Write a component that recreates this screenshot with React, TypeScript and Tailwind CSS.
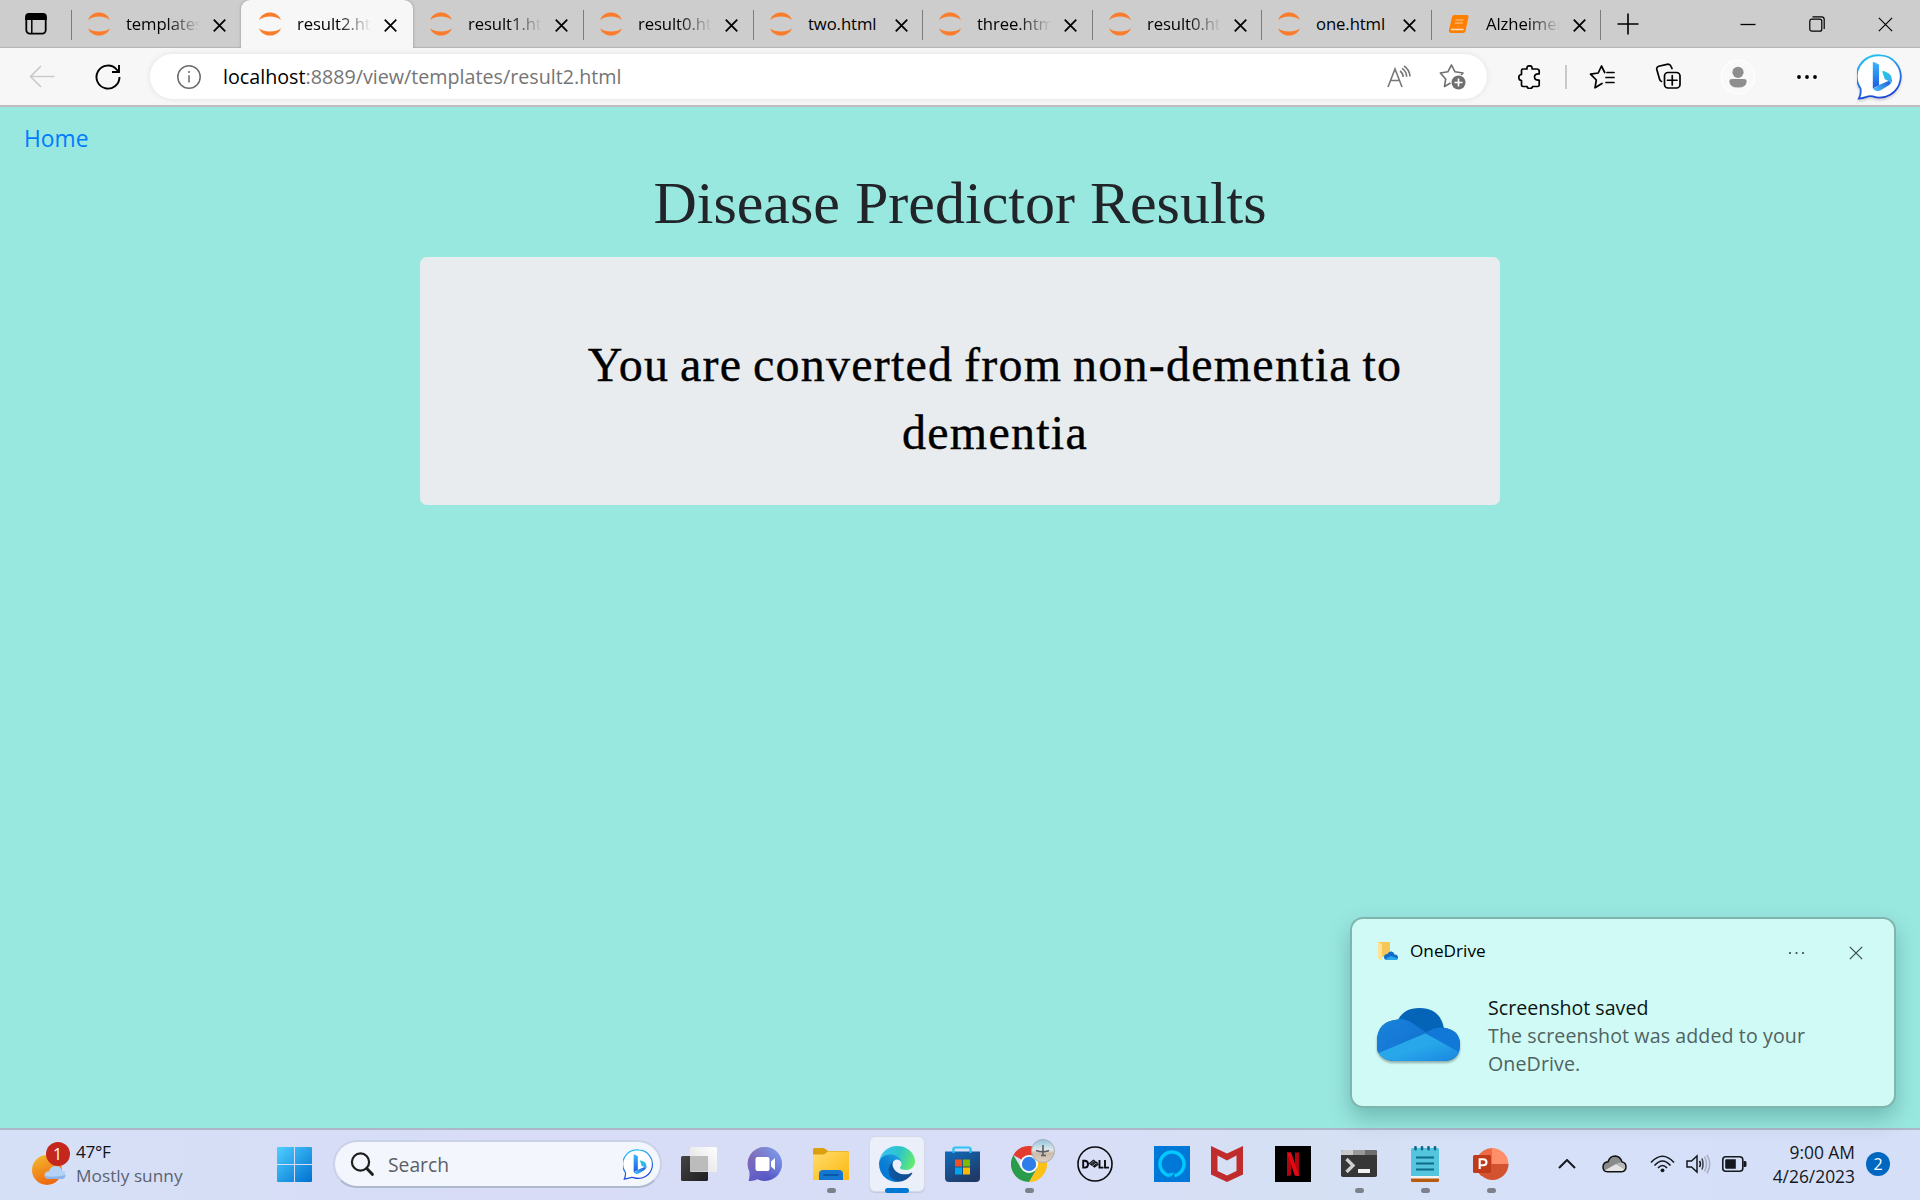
import React from "react";

type Tab = { title: string; width: string; active?: boolean; sep?: boolean; book?: boolean; fade?: boolean };

const tabs: Tab[] = [
  { title: "templates/", width: "w-[170px]", fade: true },
  { title: "result2.html", width: "w-[172px]", active: true, fade: true },
  { title: "result1.html", width: "w-[170px]", sep: true, fade: true },
  { title: "result0.html", width: "w-[170px]", sep: true, fade: true },
  { title: "two.html", width: "w-[169px]", sep: true },
  { title: "three.html", width: "w-[170px]", sep: true, fade: true },
  { title: "result0.html", width: "w-[169px]", sep: true, fade: true },
  { title: "one.html", width: "w-[170px]", sep: true },
  { title: "Alzheimer", width: "w-[169px]", sep: true, book: true, fade: true },
];

function Jupyter() {
  return (
    <svg className="block h-6 w-6 shrink-0" viewBox="0 0 24 24" fill="#fb7d2b">
      <path d="M1 8.3C4.500-2 19.500-2 23 8.300 18 3.300 6 3.300 1 8.300Z" />
      <path d="M1 16.200C4.500 26 19.500 26 23 16.200 18 20.500 6 20.500 1 16.200Z" />
    </svg>
  );
}

function Book() {
  return (
    <svg className="block h-6 w-6 shrink-0" viewBox="0 0 24 24">
      <path d="M7 3h13q2 0 1.500 2l-3 14q-.5 2-2.500 2H4.500Q1.500 21 2 18L5 5q.5-2 2-2Z" fill="#ff7f00" />
      <path d="M8.500 8h8M7.800 11h8" stroke="#ffcf9f" strokeWidth="1.100" />
      <path d="M4 17.500h12.500" stroke="#ffe1c2" strokeWidth="1.500" />
    </svg>
  );
}

function Cross({ className }: { className: string }) {
  return (
    <svg className={className} viewBox="0 0 14 14" fill="none" stroke="currentColor">
      <path d="M.8.8l12.400 12.400M13.200.8L.8 13.200" />
    </svg>
  );
}

function Bing({ className }: { className: string }) {
  return (
    <svg className={className} viewBox="0 0 48 48">
      <defs>
        <linearGradient id="bingRing" x1="0" y1="0" x2=".3" y2="1">
          <stop offset="0" stopColor="#22cdf5" />
          <stop offset=".5" stopColor="#2b8be8" />
          <stop offset="1" stopColor="#1b48d8" />
        </linearGradient>
        <linearGradient id="bingBar" x1="0" y1="0" x2="0" y2="1">
          <stop offset="0" stopColor="#3ab6ff" />
          <stop offset="1" stopColor="#1b5be0" />
        </linearGradient>
        <linearGradient id="bingLow" x1="0" y1="1" x2="1" y2="0">
          <stop offset="0" stopColor="#4cc5f7" />
          <stop offset="1" stopColor="#1a4fd6" />
        </linearGradient>
        <linearGradient id="bingTip" x1="0" y1="0" x2="1" y2="1">
          <stop offset="0" stopColor="#17d0de" />
          <stop offset="1" stopColor="#4aa0f5" />
        </linearGradient>
      </defs>
      <path d="M24.500 1.500a22 22 0 1 1-8 42.800q-3.500-1-6.500.5-4 1.500-8 1.700 2.500-4.500 1.700-10.500A22 22 0 0 1 24.500 1.500Z" fill="#fff" stroke="url(#bingRing)" strokeWidth="1.900" />
      <path d="M16.500 9q0-1 1-.6l4.500 2.100q1 .6 1 1.800v20.200l-6.500 3.600Z" fill="url(#bingBar)" />
      <path d="M16.500 34.500q.5 4.300 5 4.300 2 0 3.800-1.200l8-5q3.200-2.300 3-6l-13.300 5.700-3.200 2.500q-3.300 1.800-3.300-.3Z" fill="url(#bingLow)" />
      <path d="M26.500 19q-.6-1.800 1.400-1.200l4 1.700q4.600 2.300 4.400 7.500-.1 2.500-1.800 4.300 0-3.300-5.500-5Z" fill="url(#bingTip)" />
    </svg>
  );
}

function TabStrip() {
  return (
    <div className="flex h-12 shrink-0 bg-[#cdcdcd] shadow-[inset_0_-2px_1px_-1px_#b4b4b4]">
      <div className="flex w-[71px] items-center pl-6">
        <svg className="h-6 w-6" viewBox="0 0 24 24" fill="none" stroke="#000" strokeWidth="1.800">
          <rect x="2.300" y="3" width="19.400" height="18.600" rx="3.500" />
          <path d="M2 7V5q0-3 3-3h14q3 0 3 3v2Z" fill="#000" />
          <path d="M7.800 7v14" strokeWidth="1.500" />
        </svg>
      </div>
      {tabs.map((t, i) => (
        <div key={i} className={`relative flex h-12 shrink-0 items-center ${t.width} ${t.active ? "z-10 rounded-t-[9px] bg-[#f7f7f7] pl-[17px] shadow-[0_0_3px_rgba(0,0,0,0.28)] [clip-path:inset(-4px_-4px_0_-4px)]" : "pl-4"}`}>
          {i === 0 && <span className="absolute top-2.5 left-0 h-[30px] w-px bg-[#7c7c7c]" />}
          {t.sep && <span className="absolute top-2.5 -right-px h-[30px] w-[1.500px] bg-[#7c7c7c]" />}
          {t.book ? <Book /> : <Jupyter />}
          <span className={`ml-[15px] w-[74px] overflow-hidden text-[16.700px] leading-6 tracking-[-0.100px] whitespace-nowrap text-black ${t.fade ? "[mask-image:linear-gradient(to_right,#000_55%,transparent_100%)]" : ""}`}>
            {t.title}
          </span>
          <Cross className="mt-[2px] ml-[13px] h-[13px] w-[13px] shrink-0 stroke-[1.900]" />
        </div>
      ))}
      <div className="flex flex-1 items-center pl-[17px]">
        <svg className="h-[22px] w-[22px]" viewBox="0 0 22 22" stroke="#000" strokeWidth="1.600">
          <path d="M11 .5v21M.5 11h21" />
        </svg>
      </div>
      <div className="flex w-[180px] items-center justify-between pr-[27px]">
        <svg className="h-4 w-4" viewBox="0 0 16 16" stroke="#000" strokeWidth="1.300">
          <path d="M.5 8.500h15" />
        </svg>
        <svg className="h-4 w-4" viewBox="0 0 16 16" fill="none" stroke="#000" strokeWidth="1.200">
          <rect x=".8" y="3.200" width="12" height="12" rx="2" />
          <path d="M3.500.8h9q2.700 0 2.700 2.700v9.500" />
        </svg>
        <Cross className="h-[15px] w-[15px] stroke-[1.100]" />
      </div>
    </div>
  );
}

function Toolbar() {
  return (
    <div className="flex h-[59px] shrink-0 items-center border-b-2 border-[#bdbdbd] bg-[#f7f7f7]">
      <svg className="ml-[29px] h-6 w-[26px] shrink-0" viewBox="0 0 26 24" fill="none" stroke="#cacaca" strokeWidth="1.700">
        <path d="M1.500 11.500h24M12 1L1.500 11.500 12 22" />
      </svg>
      <svg className="ml-10 h-[26px] w-[26px] shrink-0" viewBox="0 0 26 26" fill="none" stroke="#000" strokeWidth="1.900">
        <path d="M24.500 13A11.500 11.500 0 1 1 21.500 5.300l2 2" />
        <path d="M24 1v7h-7" />
      </svg>
      <div className="ml-[29px] flex h-[45px] w-[1337px] shrink-0 items-center rounded-full bg-white pl-[27px] shadow-[0_0_6px_rgba(0,0,0,0.09)]">
        <svg className="h-6 w-6 shrink-0" viewBox="0 0 24 24" fill="none" stroke="#6a6a6a" strokeWidth="1.500">
          <circle cx="12" cy="12" r="11.200" />
          <path d="M12 10.300v7.200M12 6v2" />
        </svg>
        <div className="ml-[22px] flex-1 text-[19.700px] leading-7 whitespace-nowrap text-[#757575]">
          <span className="text-black">localhost</span>:8889/view/templates/result2.html
        </div>
        <svg className="mr-[28px] h-6 w-6" viewBox="0 0 24 24" fill="none" stroke="#777" strokeWidth="1.600">
          <path d="M1 22L8 4l7 18M3.500 15.500h9M13 6q3 2 3.200 6M15 3.300q4.500 3 4.700 8.500M17 1q5.500 3.500 6 10.500" />
        </svg>
        <svg className="mr-[21px] h-[27px] w-[27px]" viewBox="0 0 27 27" fill="none" stroke="#6f6f6f" strokeWidth="1.600" strokeLinejoin="round">
          <path d="M11.500 20L5.500 23.500 6.700 16 1.300 10l7.500-1.200L12.500 2l3.500 6.800 8 1.200-2 2" />
          <circle cx="19.500" cy="19.500" r="7" fill="#6f6f6f" stroke="none" />
          <path d="M19.500 15.500v8M15.500 19.500h8" stroke="#fff" />
        </svg>
      </div>
      <svg className="ml-[31px] h-6 w-[23px] shrink-0" viewBox="0 0 23 24" fill="none" stroke="#000" strokeWidth="1.700" strokeLinejoin="round">
        <path d="M3.500 5.500q0-1.500 1.500-1.500h4q-.5-3.200 2.500-3.200T14 4h4.500q2.700 0 2.700 2v3q-4.700-.5-4.700 3t4.700 3v5q0 1.500-1.700 1.500H14.500q0 2-2.700 2t-2.700-2H5q-1.500 0-1.500-1.500V15.500Q.8 15.300.8 12.500T3.500 9.500Z" />
      </svg>
      <span className="ml-6 h-6 w-[1.500px] shrink-0 bg-[#c9c9c9]" />
      <svg className="ml-[22px] h-[26px] w-[26px] shrink-0" viewBox="0 0 26 26" fill="none" stroke="#000" strokeWidth="1.700" strokeLinejoin="round" strokeLinecap="round">
        <path d="M13 19.500L6 23.800 7.300 16 1.500 10.200l7.700-1.200L12.500 2l3.200 6.500M18 8.500h7M17 13.500h8M17 18.500h8" />
      </svg>
      <svg className="ml-[40px] h-[27px] w-[27px] shrink-0" viewBox="0 0 27 27" fill="none" stroke="#000" strokeWidth="1.700" strokeLinecap="round">
        <rect x="9.500" y="9.500" width="15.500" height="15.500" rx="3.500" />
        <path d="M17.250 12.500v9.500M12.500 17.250h9.500M6.500 18.500Q5 18 4.500 16L1.800 6.500Q1.300 4 3.700 3.200L12 1.300q3-.5 4 2L17 5.500" />
      </svg>
      <svg className="ml-[38px] h-9 w-9 shrink-0" viewBox="0 0 36 36">
        <circle cx="18" cy="18" r="16.800" fill="#f9f9f9" stroke="#fff" strokeWidth="1.200" />
        <circle cx="18" cy="13.300" r="5.600" fill="#8e8e8e" />
        <path d="M12 20h12q2.600 0 2.600 2.400 0 6.100-8.600 6.100t-8.600-6.100Q9.400 20 12 20Z" fill="#8e8e8e" />
      </svg>
      <svg className="ml-[40px] h-1 w-[22px] shrink-0" viewBox="0 0 22 4">
        <circle cx="3" cy="2" r="1.900" /><circle cx="11" cy="2" r="1.900" /><circle cx="19" cy="2" r="1.900" />
      </svg>
      <Bing className="ml-[39px] h-[46px] w-[46px] shrink-0 drop-shadow-[0_2px_1px_rgba(0,0,0,0.15)]" />
    </div>
  );
}

function CloudLogo({ className }: { className: string }) {
  return (
    <svg className={className} viewBox="0 0 82 58" preserveAspectRatio="none">
      <defs>
        <clipPath id="cloudClip">
          <path d="M17 58A17 17 0 0 1 0 37Q0 14 21 12.500 27 0 42 0 62 0 66 21.500 82 24 82 40 82 58 65 58Z" />
        </clipPath>
        <linearGradient id="cloudLow" x1="0" y1="0" x2="1" y2="1">
          <stop offset="0" stopColor="#28a8ea" /><stop offset=".5" stopColor="#28a8ea" /><stop offset="1" stopColor="#1a86e0" />
        </linearGradient>
        <linearGradient id="cloudLeft" x1="0" y1="0" x2="1" y2="1">
          <stop offset="0" stopColor="#1a86dc" /><stop offset="1" stopColor="#126fd0" />
        </linearGradient>
      </defs>
      <g clipPath="url(#cloudClip)">
        <path d="M0 0h82v58H0Z" fill="#0364b8" />
        <path d="M0 0h22v12q7 0 12 4l15 11L0 52Z" fill="url(#cloudLeft)" />
        <path d="M48 27Q57 20 68 21.500h14V50Z" fill="#1278d8" />
        <path d="M0 50L48 27.500 82 49v9H0Z" fill="url(#cloudLow)" />
      </g>
    </svg>
  );
}

function Toast() {
  return (
    <div className="absolute top-[917px] left-[1350px] flex h-[191px] w-[546px] flex-col rounded-[13px] border-2 border-[#7fb5ad] bg-[#cffaf5] shadow-[0_10px_22px_rgba(0,70,60,0.28)]">
      <div className="flex h-16 items-center pl-[26px]">
        <svg className="h-5 w-5" viewBox="0 0 20 20">
          <path d="M0 1h12v15H3Z" fill="#f6c657" />
          <path d="M0 1l4 2v17l-4-2.500Z" fill="#ffe296" />
          <path d="M9 19q-3 0-3-3t3.500-3q1-3 4-2.500 2.500.3 3 3 3.500.2 3.500 3T17 19Z" fill="#0f6cc8" />
          <path d="M7 18l6-3 6.500 2.500Q19 19 17 19H9Z" fill="#28a8ea" />
        </svg>
        <span className="ml-[12px] flex-1 text-[17.200px] text-black">OneDrive</span>
        <svg className="mt-1 h-1 w-[17px]" viewBox="0 0 17 4" fill="#3a4a49">
          <circle cx="2" cy="2" r="1.100" /><circle cx="8.500" cy="2" r="1.100" /><circle cx="15" cy="2" r="1.100" />
        </svg>
        <Cross className="mt-[3px] mr-[31px] ml-[44px] h-[14px] w-[14px] stroke-[1.200] text-[#3a4a49]" />
      </div>
      <div className="flex pl-[25px]">
        <CloudLogo className="mt-[25px] h-[53px] w-[83px] drop-shadow-[0_2px_1px_rgba(0,0,0,0.3)]" />
        <div className="mt-[11px] ml-[28px] w-[340px] text-[19.600px] leading-7 text-[#4f6361]">
          <div className="text-[#0b1413]">Screenshot saved</div>
          <div className="tracking-[0.100px]">The screenshot was added to your OneDrive.</div>
        </div>
      </div>
    </div>
  );
}

function Slot({ children, running, active, className = "justify-center" }: { children: React.ReactNode; running?: boolean; active?: boolean; className?: string }) {
  return (
    <div className={`relative flex h-[68px] w-[66px] shrink-0 items-center ${className}`}>
      {active && <span className="absolute top-[6px] left-[5px] h-14 w-14 rounded-md border border-[#d3d9e6] bg-[#ebeffa] shadow-[0_1px_1px_#c0c8da]" />}
      <span className="relative">{children}</span>
      {running && <span className="absolute top-[58px] left-[28.500px] h-[5px] w-[9px] rounded-full bg-[#7d818c]" />}
      {active && <span className="absolute top-[58px] left-[21px] h-[5px] w-6 rounded-full bg-[#0078d4]" />}
    </div>
  );
}

const icon = "block h-9 w-9";

function TaskViewIcon() {
  return (
    <svg className={icon} viewBox="0 0 36 36">
      <defs>
        <linearGradient id="tvDark" x1="0" y1="0" x2="1" y2="1"><stop stopColor="#444" /><stop offset="1" stopColor="#1f1f1f" /></linearGradient>
        <linearGradient id="tvLight" x1="0" y1="1" x2="1" y2="0"><stop stopColor="#dcdcdc" /><stop offset="1" stopColor="#fff" /></linearGradient>
      </defs>
      <rect y="10" width="27" height="25" rx="1.500" fill="url(#tvDark)" />
      <rect x="9" y="1" width="27" height="25" rx="1.500" fill="url(#tvLight)" />
      <path d="M9 10h18v15.500H10q-1 0-1-1Z" fill="#bcbcbc" />
    </svg>
  );
}

function ChatIcon() {
  return (
    <svg className={icon} viewBox="0 0 36 36">
      <defs>
        <linearGradient id="chat" x1=".1" y1="0" x2=".7" y2="1"><stop stopColor="#8a6aa8" /><stop offset=".5" stopColor="#6f66c4" /><stop offset="1" stopColor="#4f52c4" /></linearGradient>
        <linearGradient id="chatTop" x1="1" y1="0" x2=".3" y2=".6"><stop stopColor="#7da3f0" /><stop offset="1" stopColor="#7da3f0" stopOpacity="0" /></linearGradient>
      </defs>
      <path d="M18 1a17 17 0 1 1-7.500 32.300Q6 35.500 1.500 34.800 3 31 2.300 25.500A17 17 0 0 1 18 1Z" fill="url(#chat)" />
      <circle cx="18" cy="18" r="17" fill="url(#chatTop)" />
      <rect x="8.500" y="11" width="14" height="14" rx="2" fill="#fff" />
      <path d="M24 15.500l4-3.500v12l-4-3.500Z" fill="#fff" />
    </svg>
  );
}

function FolderIcon() {
  return (
    <svg className={icon} viewBox="0 0 36 36">
      <defs><linearGradient id="fold" x1="0" y1="0" x2="1" y2="1"><stop stopColor="#ffdb6e" /><stop offset="1" stopColor="#fbb90c" /></linearGradient></defs>
      <path d="M0 3.500Q0 2 1.500 2H11l4 3h19.500Q36 5 36 7v6H0Z" fill="#dc9f0d" />
      <path d="M0 8.500h11L15 5.500h20q1 0 1 1V34H0Z" fill="url(#fold)" />
      <path d="M6 34V28q0-4 4-4h16q4 0 4 4v6Z" fill="#1377d1" />
      <path d="M11 29h14" stroke="#0c4f96" strokeWidth="1.600" strokeLinecap="round" />
    </svg>
  );
}

function EdgeIcon() {
  return (
    <svg className={icon} viewBox="0 0 256 256">
      <defs>
        <linearGradient id="e1" x1="63" y1="177" x2="241" y2="177" gradientUnits="userSpaceOnUse"><stop stopColor="#0c59a4" /><stop offset="1" stopColor="#114a8b" /></linearGradient>
        <linearGradient id="e2" x1="157" y1="99" x2="46" y2="221" gradientUnits="userSpaceOnUse"><stop stopColor="#1b9de2" /><stop offset=".5" stopColor="#0f80d3" /><stop offset="1" stopColor="#0078d7" /></linearGradient>
        <linearGradient id="e3" x1="20" y1="40" x2="245" y2="125" gradientUnits="userSpaceOnUse"><stop stopColor="#35c1f1" /><stop offset=".5" stopColor="#2dc5c8" /><stop offset="1" stopColor="#66eb6e" /></linearGradient>
      </defs>
      <path transform="translate(-4.600 -4.900)" fill="url(#e1)" d="M235.680 195.460a93.730 93.730 0 0 1-10.540 4.710 101.870 101.870 0 0 1-35.900 6.460c-47.320 0-88.540-32.550-88.540-74.320A31.480 31.480 0 0 1 117.130 105c-42.800 1.800-53.800 46.400-53.800 72.530 0 73.880 68.090 81.370 82.760 81.370 7.910 0 19.840-2.300 27-4.560l1.310-.44a128.340 128.340 0 0 0 66.600-52.800 4 4 0 0 0-5.320-5.640z" />
      <path transform="translate(-4.600 -4.900)" fill="url(#e2)" d="M110.340 246.340A79.200 79.200 0 0 1 87.600 225 80.720 80.720 0 0 1 117.130 105c3.120-1.470 8.450-4.130 15.540-4a32.350 32.350 0 0 1 25.690 13 31.880 31.880 0 0 1 6.360 18.660c0-.21 24.460-79.600-80-79.600-43.900 0-80 41.660-80 78.210a130.150 130.150 0 0 0 12.110 56 128 128 0 0 0 156.380 67.110 75.550 75.550 0 0 1-62.780-8z" />
      <path fill="url(#e3)" d="M152.330 148.860c-.81 1.050-3.300 2.500-3.300 5.660 0 2.610 1.700 5.120 4.720 7.230 14.380 10 41.490 8.680 41.560 8.680a59.560 59.560 0 0 0 30.270-8.350 61.380 61.380 0 0 0 30.430-52.880c.26-22.410-8-37.310-11.340-43.910C223.460 23.840 177.720 0 128 0A128 128 0 0 0 0 126.200c.48-36.540 36.800-66.050 80-66.050 3.500 0 23.460.34 42 10.070 16.340 8.580 24.900 18.940 30.850 29.210 6.180 10.670 7.280 24.150 7.280 29.520s-2.740 13.330-7.800 19.910z" />
    </svg>
  );
}

function StoreIcon() {
  return (
    <svg className={icon} viewBox="0 0 36 36">
      <defs><linearGradient id="store" x1="0" y1="0" x2=".6" y2="1"><stop stopColor="#0f6cbd" /><stop offset="1" stopColor="#1f3a67" /></linearGradient></defs>
      <path d="M8.500 8V3q0-1.500 1.500-1.500h14q1.500 0 1.500 1.500v5" fill="none" stroke="#2cc4f2" strokeWidth="2" />
      <path d="M0 5.500h35V32q0 4-4 4H4q-4 0-4-4Z" fill="url(#store)" />
      <path d="M8.500 7V2M25.500 7V2" stroke="#2cc4f2" strokeWidth="2" />
      <path d="M10 13.500h7v7h-7Z" fill="#f25022" /><path d="M18 13.500h7v7h-7Z" fill="#7fba00" />
      <path d="M10 21.500h7v7h-7Z" fill="#00a4ef" /><path d="M18 21.500h7v7h-7Z" fill="#ffb900" />
    </svg>
  );
}

function ChromeIcon() {
  return (
    <>
      <svg className={icon} viewBox="0 0 36 36">
        <path d="M18 18L2.400 9A18 18 0 0 1 33.600 9Z" fill="#e33b2e" />
        <path d="M18 9h15.600A18 18 0 0 1 18 36l7.800-13.500Z" fill="#fcc117" />
        <path d="M25.800 22.500L18 36A18 18 0 0 1 2.400 9l7.800 13.500Z" fill="#2a9b49" />
        <circle cx="18" cy="18" r="9" fill="#fff" /><circle cx="18" cy="18" r="7.200" fill="#2f7de9" />
      </svg>
      <svg className="absolute -top-[7px] left-5 h-6 w-6" viewBox="0 0 24 24">
        <defs><linearGradient id="av" x1="0" y1="0" x2="0" y2="1"><stop stopColor="#8fc4e0" /><stop offset=".45" stopColor="#dfe8ea" /><stop offset=".6" stopColor="#cdbcac" /><stop offset="1" stopColor="#dccfc2" /></linearGradient></defs>
        <circle cx="12" cy="12" r="11.500" fill="url(#av)" stroke="#a9adb2" />
        <path d="M12 6v10M5 11.500q7 2.500 13 0M10 16.500h5" stroke="#5b5d66" strokeWidth="1.600" fill="none" />
      </svg>
    </>
  );
}

function DellIcon() {
  return (
    <svg className={icon} viewBox="0 0 36 36" fill="none" stroke="#0b0b10">
      <circle cx="18" cy="18" r="17" strokeWidth="1.600" />
      <path d="M6.200 14.800v6.800h1.600q3.200-.2 3.200-3.400t-3.200-3.400ZM22.500 14v7.600h4M28 14v7.600h4" strokeWidth="1.900" />
      <path d="M11.500 18.200l5-4 1.300 1-4 3.200 1.200.9 4-3.200 1.300 1-3.800 3.200 1 .8 4-3" strokeWidth="1.200" />
    </svg>
  );
}

function AlexaIcon() {
  return (
    <svg className={icon} viewBox="0 0 36 36">
      <path d="M0 0h36v36H0Z" fill="#0078d7" />
      <path d="M15.500 29.700A12 12 0 1 1 20.500 29.700" fill="none" stroke="#00caff" strokeWidth="3.400" />
      <path d="M15.500 26.500q2.500 1.500 5-.5-2 3-4.300 5.300Z" fill="#00caff" />
    </svg>
  );
}

function McAfeeIcon() {
  return (
    <svg className={icon} viewBox="0 0 36 36" fill="#c02b2c">
      <path fillRule="evenodd" d="M2 0l16 7.500L34 0v28.500L18 36 2 28.500ZM8.500 9.500v15.500l9.500 4.500 9.500-4.500V9.500L18 14.500Z" />
    </svg>
  );
}

function NetflixIcon() {
  return (
    <svg className={icon} viewBox="0 0 36 36">
      <path d="M0 0h36v36H0Z" />
      <path d="M12 6.500h4v23l-4 .5ZM20 6.500h4V30l-4-.5Z" fill="#b1060f" />
      <path d="M12 6.500h4.200L24 30l-4.200-.5Z" fill="#e50914" />
    </svg>
  );
}

function TerminalIcon() {
  return (
    <svg className={icon} viewBox="0 0 36 36">
      <rect y="4" width="36" height="27" rx="1.800" fill="#363636" />
      <path d="M0 9V5.800Q0 4 1.800 4H12v5Z" fill="#c9c9c9" /><path d="M12 4h12v5H12Z" fill="#999" /><path d="M24 4h10.200Q36 4 36 5.800V9H24Z" fill="#6e6e6e" />
      <path d="M5.500 13l6.500 6.500L5.500 26" fill="none" stroke="#cfcfcf" strokeWidth="3.300" />
      <path d="M17 23h12v4H17Z" fill="#f1f1f1" />
    </svg>
  );
}

function NotepadIcon() {
  return (
    <svg className={icon} viewBox="0 0 36 36">
      <path d="M4 30h28v4.500q0 1.500-1.500 1.500h-25Q4 36 4 34.500Z" fill="#b95a10" />
      <path d="M4 28h28v4.500H4Z" fill="#f3f3f3" />
      <path d="M5.500 2h25Q32 2 32 3.500V30H4V3.500Q4 2 5.500 2Z" fill="#55c4dd" />
      <path d="M9 11.500h18M9 17.500h18M9 23.500h18" stroke="#0c6a8d" strokeWidth="2" />
      <path d="M8.500 1.200v2M15 1.200v2M21.500 1.200v2M28 1.200v2" stroke="#0c6a8d" strokeWidth="2.600" strokeLinecap="round" />
    </svg>
  );
}

function PowerPointIcon() {
  return (
    <svg className={icon} viewBox="0 0 36 36">
      <path d="M19.500 2v16.500L8 30A16.200 16.200 0 0 1 19.500 2Z" fill="#ed6c47" />
      <path d="M19 2a16.200 16.200 0 0 1 16.500 16.200H19Z" fill="#ff8f6b" />
      <path d="M3.500 18h32A16 16 0 0 1 3.500 18Z" fill="#d35230" />
      <rect x="0" y="9" width="18" height="18" rx="1.500" fill="#c13b1b" />
      <path d="M6.700 23V13.200h3.500q3.300 0 3.300 3t-3.300 3H6.700" fill="none" stroke="#fff" strokeWidth="2.100" />
    </svg>
  );
}

function Taskbar() {
  return (
    <div className="flex h-[72px] shrink-0 items-start border-t-2 border-[#adb5c9] bg-[linear-gradient(to_right,#d5e0f6,#d8dcf6_25%,#d8def7_55%,#d5e0f3_68%,#d6e0f8_78%,#d5dff7)]">
      <div className="flex h-[68px] w-[277px] items-center pl-[31px]">
        <div className="relative h-[42px] w-10">
          <svg className="h-[42px] w-10" viewBox="0 0 40 42">
            <defs><linearGradient id="sun" x1="0" y1="0" x2=".4" y2="1"><stop stopColor="#f4bd2f" /><stop offset="1" stopColor="#ee6a10" /></linearGradient></defs>
            <circle cx="16" cy="27" r="15" fill="url(#sun)" />
            <path d="M18 36q-4.500-.3-4.500-4 .3-3.500 4.500-3.700Q19.500 23 25 23q5 0 6 4.800 3.500.2 3.500 4T31 36Z" fill="#b4d2f6" />
            <path d="M18 36q-3.500-.3-4.500-3 9 2 21-1-.5 4-3.500 4Z" fill="#8db4ea" />
          </svg>
          <span className="absolute -top-px left-[14.500px] flex h-6 w-6 items-center justify-center rounded-full bg-[#c4281c] text-[16px] leading-none text-white">1</span>
        </div>
        <div className="ml-[5px] text-[17.200px] leading-6 tracking-[0.050px]">
          <div className="tracking-[-0.300px] text-[#101318]">47°F</div>
          <div className="text-[#5b6272]">Mostly sunny</div>
        </div>
      </div>
      <div className="flex h-[68px] w-[56px] items-center">
        <svg className="h-[35px] w-[35px]" viewBox="0 0 35 35">
          <defs><linearGradient id="win" x1="0" y1="0" x2="1" y2="1"><stop stopColor="#4fd0ff" /><stop offset="1" stopColor="#0070d0" /></linearGradient></defs>
          <path d="M1 0h16v17H0V1q0-1 1-1ZM18 0h16q1 0 1 1v16H18ZM0 18h17v17H1q-1 0-1-1ZM18 18h17v16q0 1-1 1H18Z" fill="url(#win)" />
        </svg>
      </div>
      <div className="mt-[10px] mr-[4px] flex h-12 w-[329px] items-center rounded-full border-2 border-[#c9d2e6] border-b-[#aeb8ce] bg-[#f3f6fd] pr-[6px] pl-[15px]">
        <svg className="h-6 w-6" viewBox="0 0 24 24" fill="none" stroke="#1e1e1e" strokeWidth="2.200">
          <circle cx="10.500" cy="10" r="8.600" /><path d="M16.800 16.500l5.500 5.800" strokeWidth="3" strokeLinecap="round" />
        </svg>
        <span className="mt-px ml-[14px] flex-1 text-[19.300px] leading-6 text-[#5d5f66]">Search</span>
        <Bing className="h-[31px] w-[31px]" />
      </div>
      <Slot><TaskViewIcon /></Slot>
      <Slot><ChatIcon /></Slot>
      <Slot running><FolderIcon /></Slot>
      <Slot active><EdgeIcon /></Slot>
      <Slot><StoreIcon /></Slot>
      <Slot running><ChromeIcon /></Slot>
      <Slot><DellIcon /></Slot>
      <Slot className="pl-[26px]"><AlexaIcon /></Slot>
      <Slot><McAfeeIcon /></Slot>
      <Slot><NetflixIcon /></Slot>
      <Slot running><TerminalIcon /></Slot>
      <Slot running><NotepadIcon /></Slot>
      <Slot running><PowerPointIcon /></Slot>
      <div className="flex h-[68px] flex-1 items-center">
        <svg className="ml-[34px] h-[10px] w-[18px]" viewBox="0 0 18 10" fill="none" stroke="#15181e" strokeWidth="2"><path d="M1 9l8-8 8 8" /></svg>
        <svg className="ml-[26px] h-[18px] w-[25px]" viewBox="0 0 25 18">
          <path d="M5.500 16.800Q1 16.500 1 12q.2-4.700 5-5.200Q8 1 13 1q5.500.3 7 6 4 .7 4 5t-4.500 4.800Z" fill="#8b8b8b" stroke="#111" strokeWidth="1.500" />
          <path d="M3 15.300L14 9l8.500 5q-1 2-3.500 2H6q-2 0-3-.7Z" fill="#e4e4e4" />
          <path d="M14 9q3-2 5.500-1.500 3.500.5 3.700 4.500 0 1-.6 2Z" fill="#b9b9b9" />
        </svg>
        <svg className="ml-[23px] h-[18px] w-[25px]" viewBox="0 0 25 18" fill="none" stroke="#15181e" strokeWidth="1.600">
          <path d="M1 7.500q11.500-12.500 23 0M4.500 10.500q8-9 16 0M8 13q4.500-5 9 0" /><circle cx="12.500" cy="15.300" r="1.900" fill="#15181e" stroke="none" />
        </svg>
        <svg className="ml-[11px] h-5 w-[25px]" viewBox="0 0 25 20" fill="none" stroke="#15181e" strokeWidth="1.500">
          <path d="M1 7h4.500L11 2v16l-5.500-5H1Z" /><path d="M13.500 7q2 3 0 6" /><path d="M16 4.500q2 5.500 0 11" strokeOpacity=".8" /><path d="M18.500 2.500q4 7.500 0 15M21 .8q5.500 9 0 18.500" strokeOpacity=".25" />
        </svg>
        <svg className="ml-[11px] h-4 w-[25px]" viewBox="0 0 25 16"><rect x=".8" y=".8" width="20" height="14.400" rx="3" fill="none" stroke="#15181e" strokeWidth="1.600" /><path d="M3.200 4.200q0-1 1-1h9.600v9.600H4.200q-1 0-1-1ZM21.500 5h1.500q1.500 0 1.500 1.500v3q0 1.500-1.500 1.500h-1.500Z" fill="#15181e" /></svg>
        <div className="flex-1 text-right text-[17.400px] leading-6 text-[#15181e]">
          <div>9:00 AM</div>
          <div>4/26/2023</div>
        </div>
        <span className="mr-[30px] ml-[11px] flex h-6 w-6 items-center justify-center rounded-full bg-[#0067c0] text-[16px] leading-none text-white">2</span>
      </div>
    </div>
  );
}

export default function App() {
  return (
    <div className="relative flex h-[1200px] w-[1920px] flex-col overflow-hidden bg-[#99e8e0] font-['Open_Sans',sans-serif]">
      <TabStrip />
      <Toolbar />
      <main className="flex flex-1 flex-col pt-[14px]">
        <a className="ml-6 h-9 text-[22.800px] leading-9 text-[#007bff]">Home</a>
        <h1 className="mt-[10px] text-center font-['Liberation_Serif',serif] text-[60px] leading-[72px] text-[#212529]">Disease Predictor Results</h1>
        <section className="mx-auto mt-[18px] h-[248px] w-[1080px] rounded-[7px] bg-[#e9ecef] pt-[74px] pr-12 pl-[118px]">
          <p className="text-center font-['Liberation_Serif',serif] text-[48px] leading-[68px] tracking-[1.250px] text-black [word-spacing:-2.600px] [-webkit-text-stroke:0.400px_#000]">
            You are converted from non-dementia to dementia
          </p>
        </section>
      </main>
      <Toast />
      <Taskbar />
    </div>
  );
}
